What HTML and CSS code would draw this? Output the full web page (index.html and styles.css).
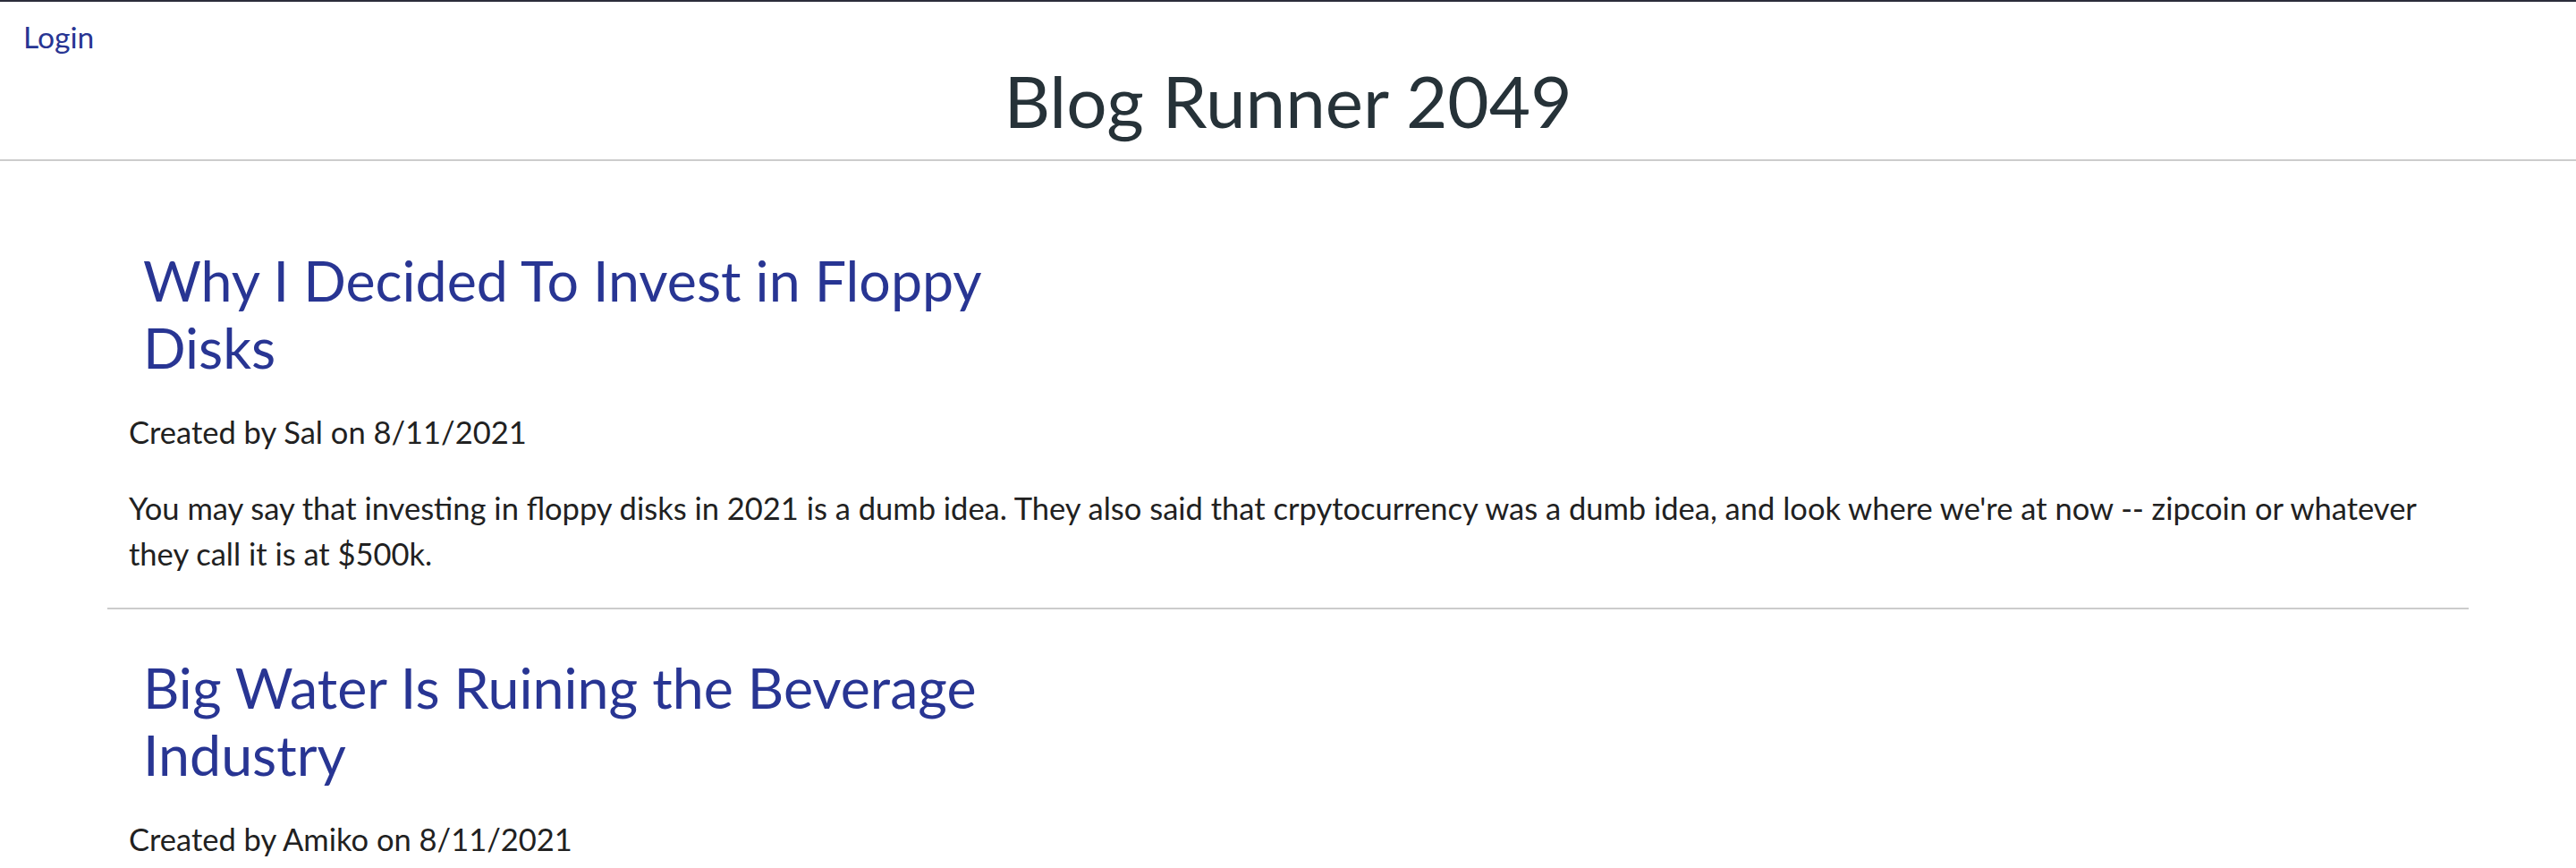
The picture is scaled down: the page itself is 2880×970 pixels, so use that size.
FILE: index.html
```html
<!DOCTYPE html>
<html lang="en">
<head>
<meta charset="utf-8">
<title>Blog Runner 2049</title>
<link rel="stylesheet" href="styles.css">
</head>
<body>
<header class="site-header">
  <nav class="nav-row"><a class="nav-link" href="#">Login</a></nav>
  <h1 class="site-title">Blog Runner 2049</h1>
</header>
<main class="posts">
  <article class="post">
    <h2 class="post-title"><a href="#">Why I Decided To Invest in Floppy Disks</a></h2>
    <p class="post-meta">Created by Sal on 8/11/2021</p>
    <p class="post-body">You may say that investing in floppy disks in 2021 is a dumb idea. They also said that crpytocurrency was a dumb idea, and look where we're at now -- zipcoin or whatever they call it is at $500k.</p>
  </article>
  <article class="post">
    <h2 class="post-title"><a href="#">Big Water Is Ruining the Beverage Industry</a></h2>
    <p class="post-meta">Created by Amiko on 8/11/2021</p>
    <p class="post-body">Water companies have been quietly buying up every soda, juice and sports drink brand they can find. Soon there will be nothing left to drink but water.</p>
  </article>
</main>
</body>
</html>
```

FILE: styles.css
```css
html, body {
  margin: 0;
  padding: 0;
  background: #ffffff;
}

body {
  font-family: "Lato", "Noto Sans", sans-serif;
  font-size: 34.5px;
  line-height: 50.7px;
  color: #212121;
}

a {
  color: #283593;
  text-decoration: none;
}

.site-header {
  border-top: 2px solid #2b2d3b;
  border-bottom: 2px solid #cccccc;
  padding: 19px 0 18px;
  line-height: normal;
}

.nav-row {
  display: flex;
  padding: 0 26px;
}

.nav-link {
  font-size: 33.6px;
}

.site-title {
  margin: 3px 0 0;
  font-size: 80px;
  font-weight: 400;
  text-align: center;
  color: #263238;
}

.posts {
  margin: 0 120px;
  padding-top: 46px;
}

.post {
  padding: 49px 16px 0 24px;
  border-bottom: 2px solid #cccccc;
}

.post-title {
  margin: 0;
  padding: 0 16px;
  max-width: 1040px;
  font-size: 62.7px;
  font-weight: 400;
  line-height: 75px;
}

.post-meta {
  margin: 33px 0 0;
}

.post-body {
  margin: 34.5px 0;
}
```
